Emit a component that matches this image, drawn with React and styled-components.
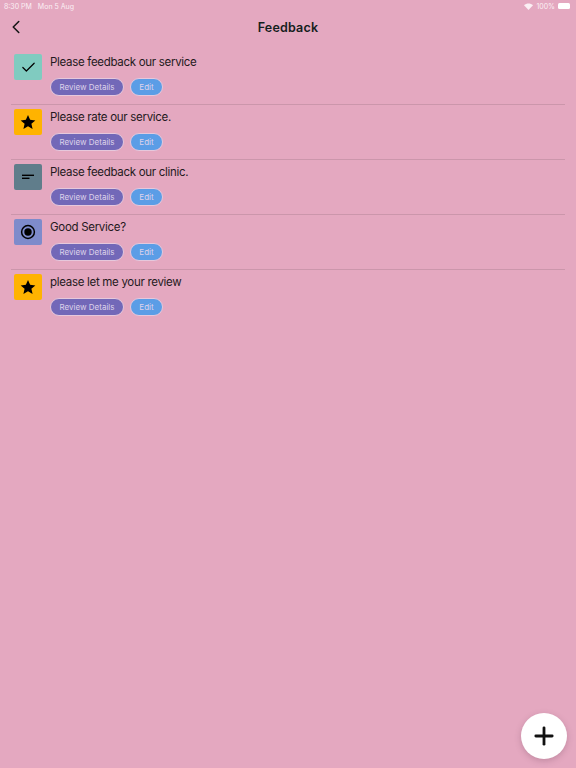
import React from "react";
import styled, { createGlobalStyle } from "styled-components";
import { Check, ChevronLeft, Plus } from "lucide-react";

const GlobalStyle = createGlobalStyle`
  html, body {
    margin: 0;
    padding: 0;
    background: #e4a8c0;
  }
  * { box-sizing: border-box; }
`;

const Page = styled.div`
  position: relative;
  width: 576px;
  height: 768px;
  overflow: hidden;
  background: #e4a8c0;
  font-family: Inter, "Liberation Sans", sans-serif;
  color: #1d1a1c;
`;

const StatusBar = styled.div`
  display: flex;
  align-items: center;
  justify-content: space-between;
  height: 12px;
  padding: 0 6px 0 4px;
  color: #fbeff4;
  font-size: 7px;
`;

const StatusGroup = styled.div`
  display: flex;
  align-items: center;
  gap: ${(p) => p.$gap || 3}px;
`;

const Battery = styled.span`
  display: block;
  width: 12px;
  height: 6px;
  background: #fff;
  border-radius: 1.5px;
`;

const Header = styled.header`
  display: flex;
  align-items: center;
  justify-content: center;
  position: relative;
  height: 30px;
`;

const BackButton = styled.button`
  position: absolute;
  left: 5px;
  top: 4px;
  display: flex;
  padding: 0;
  border: 0;
  background: none;
  color: #151515;
`;

const Title = styled.h1`
  margin: 0;
  font-size: 12.5px;
  font-weight: 600;
  letter-spacing: 0.2px;
  color: #14201c;
`;

const List = styled.div`
  display: flex;
  flex-direction: column;
  padding: 8px 11px 0;
`;

const Row = styled.div`
  display: flex;
  gap: 8px;
  height: 55px;
  padding: 4px 3px 0;
  border-bottom: ${(p) => (p.$last ? "none" : "1px solid #cb96ab")};
`;

const IconTile = styled.div`
  display: flex;
  align-items: center;
  justify-content: center;
  flex: none;
  width: 28px;
  height: 26px;
  border-radius: 2px;
  background: ${(p) => p.$bg};
  color: #000;
`;

const Body = styled.div`
  display: flex;
  flex-direction: column;
  gap: 8px;
`;

const RowTitle = styled.div`
  height: 16px;
  font-size: 11.5px;
  line-height: 16px;
  letter-spacing: -0.3px;
  color: #241a20;
`;

const Actions = styled.div`
  display: flex;
  gap: 6px;
`;

const Pill = styled.button`
  height: 18px;
  width: ${(p) => p.$width}px;
  padding: 0;
  border: 1px solid #e6c8dc;
  border-radius: 9px;
  background: ${(p) => p.$bg};
  color: #ddd3ea;
  font-family: inherit;
  font-size: 8px;
`;

const Fab = styled.button`
  position: absolute;
  left: 521px;
  top: 713px;
  display: flex;
  align-items: center;
  justify-content: center;
  width: 46px;
  height: 46px;
  padding: 0;
  border: 0;
  border-radius: 50%;
  background: #fff;
  color: #111;
  box-shadow: 0 2px 6px rgba(90, 50, 70, 0.25);
`;

const Star = () => (
  <svg width="16" height="16" viewBox="0 0 24 24" fill="currentColor">
    <path d="M12 1.5l3.2 7.3 7.8.8-5.9 5.2 1.8 7.7L12 18.4l-6.9 4.1 1.8-7.7L1 9.6l7.8-.8z" />
  </svg>
);

const ShortText = () => (
  <svg width="14" height="14" viewBox="0 0 14 14" fill="currentColor">
    <rect x="1" y="4.6" width="12" height="1.4" />
    <rect x="1" y="7.6" width="7.5" height="1.4" />
  </svg>
);

const Radio = () => (
  <svg width="16" height="16" viewBox="0 0 16 16">
    <circle cx="8" cy="8" r="6.4" fill="none" stroke="currentColor" strokeWidth="1.5" />
    <circle cx="8" cy="8" r="3.7" fill="currentColor" />
  </svg>
);

const Wifi = () => (
  <svg width="9" height="7" viewBox="0 0 18 14" fill="#fbeff4">
    <path d="M9 14L0 4.5C5-.5 13-.5 18 4.5z" />
  </svg>
);

const items = [
  { title: "Please feedback our service", bg: "#80cbc0", icon: <Check size={17} strokeWidth={1.7} /> },
  { title: "Please rate our service.", bg: "#ffb300", icon: <Star /> },
  { title: "Please feedback our clinic.", bg: "#607d8b", icon: <ShortText /> },
  { title: "Good Service?", bg: "#7e8bcb", icon: <Radio /> },
  { title: "please let me your review", bg: "#ffb300", icon: <Star /> },
];

export default function App() {
  return (
    <Page>
      <GlobalStyle />
      <StatusBar>
        <StatusGroup $gap={6}>
          <span>8:30 PM</span>
          <span>Mon 5 Aug</span>
        </StatusGroup>
        <StatusGroup>
          <Wifi />
          <span>100%</span>
          <Battery />
        </StatusGroup>
      </StatusBar>
      <Header>
        <BackButton aria-label="Back">
          <ChevronLeft size={22} strokeWidth={1.7} />
        </BackButton>
        <Title>Feedback</Title>
      </Header>
      <List>
        {items.map((item, i) => (
          <Row key={item.title} $last={i === items.length - 1}>
            <IconTile $bg={item.bg}>{item.icon}</IconTile>
            <Body>
              <RowTitle>{item.title}</RowTitle>
              <Actions>
                <Pill $width={74} $bg="#7268b8">Review Details</Pill>
                <Pill $width={33} $bg="#5b9de6">Edit</Pill>
              </Actions>
            </Body>
          </Row>
        ))}
      </List>
      <Fab aria-label="Add">
        <Plus size={28} strokeWidth={2.4} />
      </Fab>
    </Page>
  );
}
